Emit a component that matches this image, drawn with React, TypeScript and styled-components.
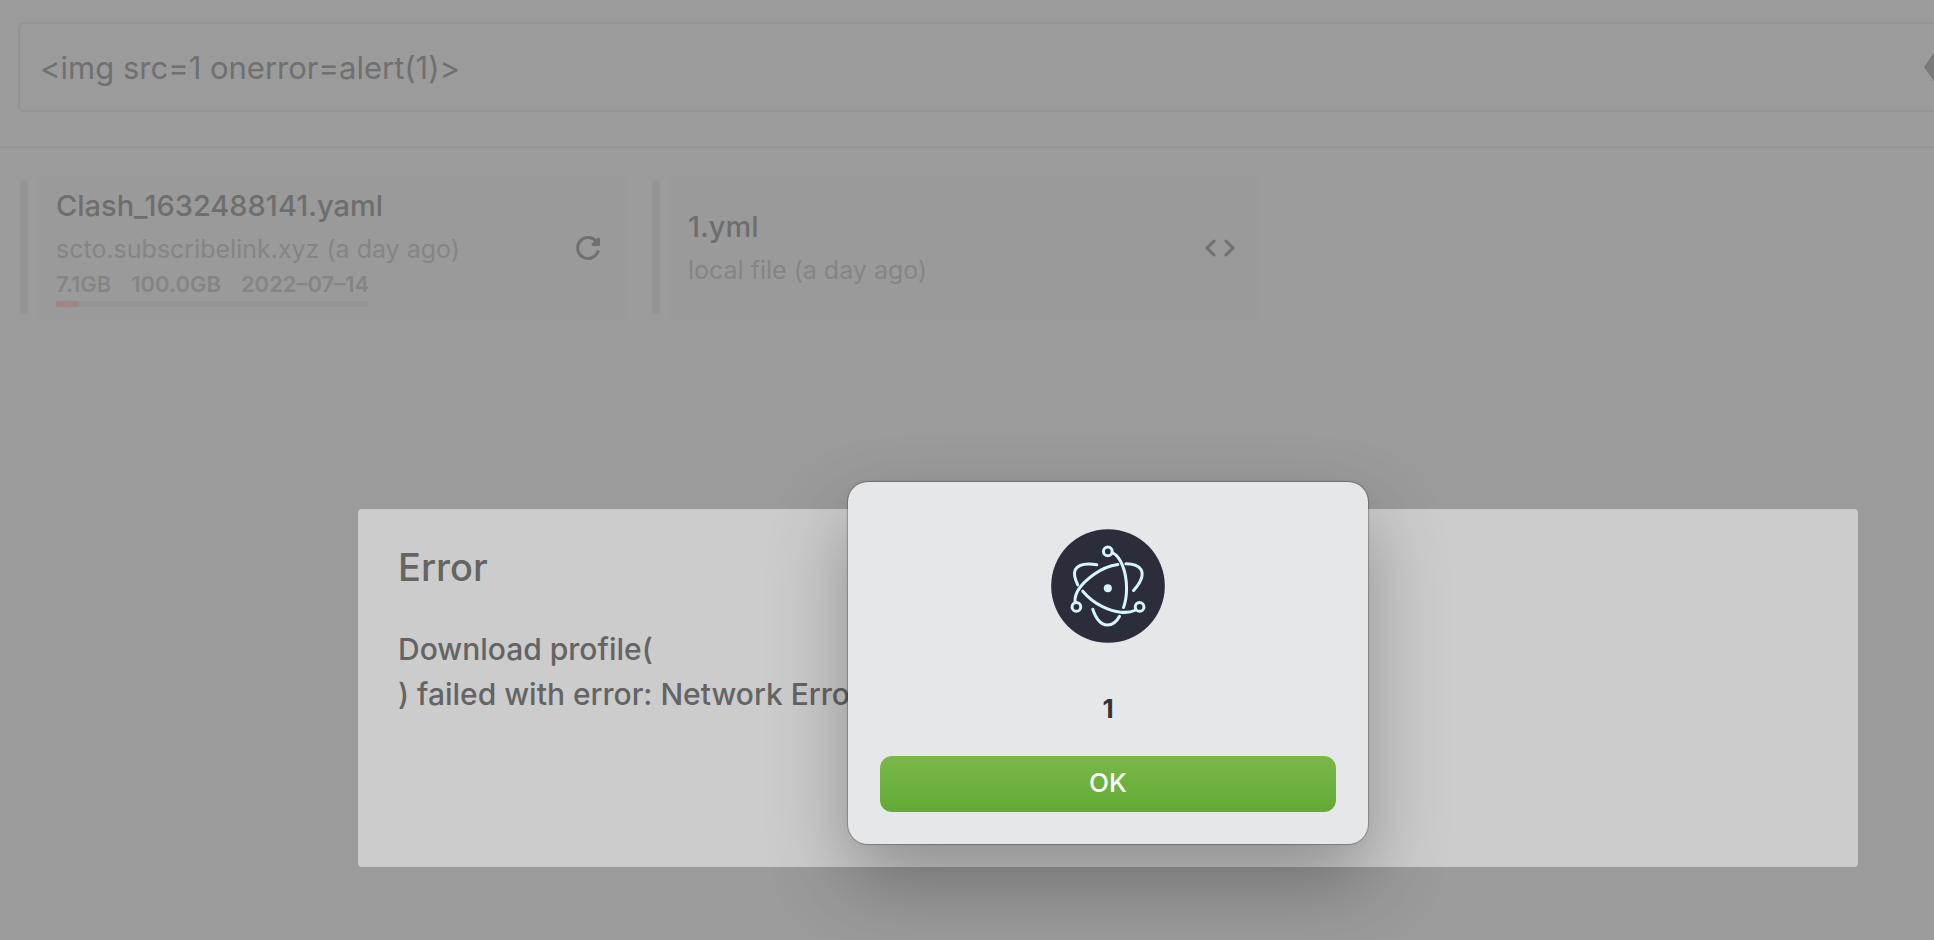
import React from 'react';
import styled, { createGlobalStyle } from 'styled-components';

const GlobalStyle = createGlobalStyle`
  * { box-sizing: border-box; }
  body { margin: 0; background: #9b9b9b; overflow: hidden; font-family: Inter, "Liberation Sans", sans-serif; }
  h2, p { margin: 0; }
`;

const Viewport = styled.div`
  position: relative;
  min-height: 100vh;
  overflow: hidden;
  background: #9b9b9b;
`;

const Shell = styled.main`
  min-width: 2216px;
`;

const Toolbar = styled.header`
  display: flex;
  align-items: center;
  padding: 22px 20px 34px 18px;
  border-bottom: 2px solid #959595;
`;

const UrlField = styled.div`
  display: flex;
  align-items: center;
  width: 1962px;
  height: 90px;
  padding-left: 20px;
  border: 2px solid #949494;
  border-radius: 6px;
`;

const UrlInput = styled.input`
  flex: 1;
  min-width: 0;
  padding: 2px 0 0;
  border: 0;
  outline: 0;
  background: transparent;
  color: #707070;
  font: 400 31px/44px Inter, "Liberation Sans", sans-serif;
`;

const ClearButton = styled.button`
  width: 54px;
  height: 28px;
  padding: 0;
  border: 0;
  background: transparent;
  color: #76787a;
  svg { display: block; }
`;

const Profiles = styled.section`
  display: flex;
  gap: 24px;
  padding: 28px 20px;
`;

const Profile = styled.article`
  display: flex;
  align-items: center;
  gap: 8px;
  width: 608px;
`;

const Accent = styled.span`
  width: 8px;
  height: 135px;
  border-radius: 4px;
  background: #959595;
`;

const Card = styled.div`
  flex: 1;
  display: flex;
  align-items: center;
  justify-content: space-between;
  height: 143px;
  padding: 0 27px 0 20px;
  border-radius: 4px;
  background: #9a9a9a;
`;

const Name = styled.h2`
  color: #6e6e6e;
  font-size: 29px;
  font-weight: 500;
  line-height: 44px;
`;

const Source = styled.p`
  color: #858585;
  font-size: 25px;
  line-height: 42px;
`;

const Usage = styled.div`
  width: fit-content;
  margin-bottom: 4px;
`;

const Stats = styled.p`
  display: flex;
  gap: 20px;
  margin-bottom: 3px;
  color: #858585;
  font-size: 22px;
  font-weight: 600;
  line-height: 28px;
`;

const Track = styled.div`
  height: 6px;
  border-radius: 3px;
  overflow: hidden;
  background: #959595;
`;

const Fill = styled.div`
  height: 100%;
  background: #a08585;
`;

const IconButton = styled.button`
  padding: 0;
  border: 0;
  background: transparent;
  color: #707070;
  svg { display: block; overflow: visible; }
`;

const Layer = styled.div<{ $top: number }>`
  position: absolute;
  top: 0;
  left: 0;
  display: flex;
  justify-content: center;
  width: 100%;
  min-width: 2216px;
  padding-top: ${(p) => p.$top}px;
`;

const ErrorModal = styled.section`
  width: 1500px;
  min-height: 358px;
  padding: 34px 40px;
  border-radius: 4px;
  background: #cccccc;
  color: #646464;
`;

const ErrorTitle = styled.h2`
  margin-bottom: 36px;
  font-size: 38px;
  font-weight: 500;
  line-height: 48px;
`;

const ErrorText = styled.p`
  font-size: 30px;
  font-weight: 500;
  line-height: 45px;
`;

const Dialog = styled.div`
  display: flex;
  flex-direction: column;
  align-items: center;
  width: 520px;
  padding: 47px 32px 32px;
  border-radius: 20px;
  background: #e6e7e9;
  box-shadow: 0 0 1px 1px rgba(0, 0, 0, 0.25), 0 36px 80px rgba(0, 0, 0, 0.3);
`;

const Message = styled.p`
  margin: 48px 0 30px;
  color: #333436;
  font-size: 26px;
  font-weight: 700;
  line-height: 35px;
`;

const OkButton = styled.button`
  width: 100%;
  height: 56px;
  padding: 0 0 2px;
  border: 0;
  border-radius: 12px;
  background: linear-gradient(#7ab84a, #62aa34);
  color: #fff;
  font: 500 26px/32px Inter, "Liberation Sans", sans-serif;
`;

const Watermarks = styled.div`
  position: absolute;
  top: -20px;
  left: 185px;
  display: grid;
  grid-template-columns: repeat(4, 471px);
  grid-auto-rows: 417px;
  color: rgba(255, 255, 255, 0.02);
  font-size: 32px;
  line-height: 43px;
  pointer-events: none;
`;

const ElectronLogo = () => (
  <svg width="114" height="114" viewBox="64 57 341 341" fill="none" stroke="#d7f6fd" strokeWidth="9" strokeLinecap="round" aria-hidden="true">
    <circle cx="234.500" cy="227.500" r="170" fill="#2b2e3a" stroke="none" />
    <circle cx="234" cy="124" r="13" />
    <circle cx="140" cy="290" r="13" />
    <circle cx="329" cy="290" r="13" />
    <circle cx="234" cy="234" r="12" fill="#d7f6fd" stroke="none" />
    <path d="M248 128C273 140 290 185 290 235C290 256 287 275 281 292" />
    <path d="M136 274C134 250 155 220 192 193C217 175 243 166 264 163" />
    <path d="M159 243C175 262 195 278 218 289C256 308 293 311 316 300" />
    <path d="M201 164C170 159 146 163 137 178C131 190 135 206 144 224" />
    <path d="M288 161C310 161 326 168 333 178C342 193 332 217 311 241" />
    <path d="M189 297C199 327 215 344 233 344C247 344 260 335 269 318" />
  </svg>
);

const RefreshIcon = () => (
  <svg width="26" height="26" viewBox="0 0 26 26" fill="none" stroke="currentColor" strokeWidth="3" strokeLinecap="round" strokeLinejoin="round" aria-hidden="true">
    <path d="M23 16.500A10.500 10.500 0 1 1 20.500 5.500" />
    <path d="M23.500 4V9.500H18Z" fill="currentColor" />
  </svg>
);

const CodeIcon = () => (
  <svg width="28" height="18" viewBox="0 0 28 18" fill="none" stroke="currentColor" strokeWidth="3" strokeLinecap="round" strokeLinejoin="round" aria-hidden="true">
    <path d="M9 2L2 9L9 16M21 2L28 9L21 16" />
  </svg>
);

const WATERMARK_COUNT = 12;

export default function App() {
  return (
    <Viewport>
      <GlobalStyle />
      <Shell>
        <Toolbar>
          <UrlField>
            <UrlInput aria-label="Profile URL" defaultValue="<img src=1 onerror=alert(1)>" />
            <ClearButton aria-label="Clear">
              <svg width="54" height="28" viewBox="0 0 54 28" aria-hidden="true">
                <path d="M0 14L10 0H54V28H10Z" fill="currentColor" />
              </svg>
            </ClearButton>
          </UrlField>
        </Toolbar>
        <Profiles>
          <Profile>
            <Accent />
            <Card>
              <div>
                <Name>Clash_1632488141.yaml</Name>
                <Source>scto.subscribelink.xyz (a day ago)</Source>
                <Usage>
                  <Stats><span>7.1GB</span><span>100.0GB</span><span>2022–07–14</span></Stats>
                  <Track><Fill style={{ width: '7.1%' }} /></Track>
                </Usage>
              </div>
              <IconButton aria-label="Refresh profile"><RefreshIcon /></IconButton>
            </Card>
          </Profile>
          <Profile>
            <Accent />
            <Card>
              <div>
                <Name>1.yml</Name>
                <Source>local file (a day ago)</Source>
              </div>
              <IconButton aria-label="Edit profile"><CodeIcon /></IconButton>
            </Card>
          </Profile>
        </Profiles>
      </Shell>
      <Layer $top={509}>
        <ErrorModal role="dialog" aria-label="Error">
          <ErrorTitle>Error</ErrorTitle>
          <ErrorText>Download profile(<br />) failed with error: Network Error</ErrorText>
        </ErrorModal>
      </Layer>
      <Layer $top={482}>
        <Dialog role="alertdialog" aria-label="Alert">
          <ElectronLogo />
          <Message>1</Message>
          <OkButton>OK</OkButton>
        </Dialog>
      </Layer>
      <Watermarks aria-hidden="true">
        {Array.from({ length: WATERMARK_COUNT }, (_, i) => (
          <span key={i}>ganweiji<br />ang</span>
        ))}
      </Watermarks>
    </Viewport>
  );
}
